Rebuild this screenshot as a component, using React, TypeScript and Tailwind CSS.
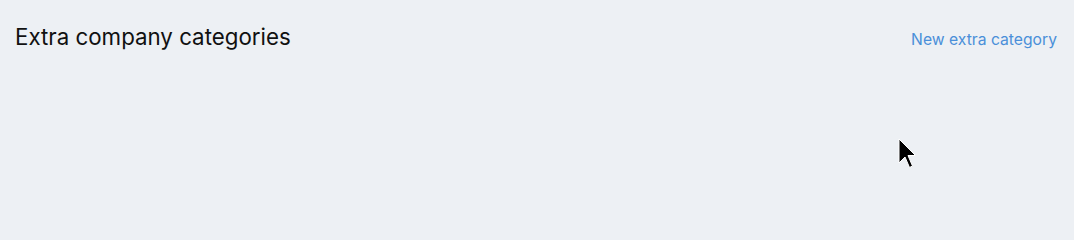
export default function App() {
  return (
    <div className="relative min-h-screen w-full bg-[#edf0f4] font-['Inter',sans-serif]">
      <div className="flex items-baseline justify-between pl-[15px] pr-[17px] pt-[23px]">
        <h1 className="text-[22.3px] leading-7 text-[#111111]">Extra company categories</h1>
        <a href="#" className="text-[15.7px] leading-5 text-[#4a8fd9]">
          New extra category
        </a>
      </div>
      {/* mouse pointer captured in the shot */}
      <svg
        className="absolute left-[898px] top-[138px]"
        width="20"
        height="31"
        viewBox="0 0 20 31"
      >
        <path
          d="M1 1 L1 25 L7 19 L11.5 29.5 L14.5 28 L10 17.5 L17.5 17.5 Z"
          fill="#000"
          stroke="#fff"
          strokeWidth="1"
          strokeLinejoin="miter"
        />
      </svg>
    </div>
  )
}
